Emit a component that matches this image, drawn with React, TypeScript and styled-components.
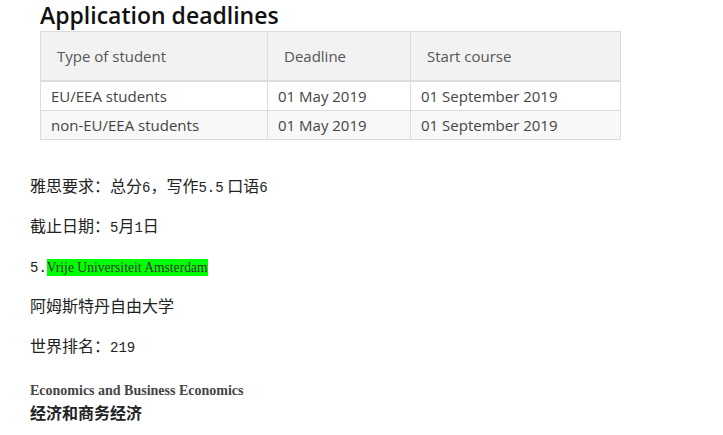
import React from 'react';
import styled, { createGlobalStyle } from 'styled-components';

const GlobalStyle = createGlobalStyle`
    html, body {
        margin: 0;
        padding: 0;
        background: #ffffff;
    }
`;

const Page = styled.div`
    padding: 0 0 0 30px;
    font-family: 'Liberation Mono', 'Noto Sans CJK SC', monospace;
    color: #222;
`;

const Deadlines = styled.section`
    margin-left: 10px;
    width: 580px;
    font-family: 'Open Sans', sans-serif;
`;

const Title = styled.h2`
    margin: 0 0 2px;
    padding-top: 1px;
    font-size: 23px;
    line-height: 28px;
    font-weight: 600;
    color: #111;
`;

const Table = styled.table`
    width: 580px;
    table-layout: fixed;
    border-collapse: collapse;
    border: 1px solid #dcdcdc;
    font-size: 15px;
`;

const HeadCell = styled.th<{ $w: number }>`
    box-sizing: border-box;
    width: ${(p) => p.$w}px;
    height: 49px;
    padding: 0 16px;
    text-align: left;
    font-weight: 400;
    color: #555;
    background: #f2f2f2;
    border: 1px solid #dcdcdc;
    border-bottom-width: 2px;
`;

const Row = styled.tr<{ $alt?: boolean }>`
    background: ${(p) => (p.$alt ? '#f8f8f8' : '#ffffff')};
`;

const Cell = styled.td`
    height: 28px;
    padding: 0 10px;
    color: #444;
    border: 1px solid #dcdcdc;
    white-space: nowrap;
`;

const Para = styled.p<{ $first?: boolean }>`
    margin: ${(p) => (p.$first ? '33px' : '16px')} 0 16px;
    font-size: 16px;
    line-height: 24px;
    font-family: 'Noto Sans CJK SC', 'Liberation Mono', monospace;
    color: #222;
`;

const Num = styled.span`
    font-family: 'Liberation Mono', monospace;
    font-size: 14px;
    line-height: 1;
`;

const Highlight = styled.span`
    background: #00ff00;
    font-family: 'Liberation Serif', serif;
    font-size: 13.6px;
    line-height: 1;
    padding: 1px 0;
    color: #333;
`;

const Subject = styled.div`
    margin-top: 25px;
    font-family: 'Liberation Serif', serif;
    font-weight: 700;
    font-size: 14px;
    line-height: 18px;
    color: #444;
`;

const SubjectCn = styled.div`
    font-family: 'Noto Sans CJK SC', sans-serif;
    font-weight: 700;
    font-size: 16px;
    line-height: 24px;
    color: #222;
`;

const rows = [
    ['EU/EEA students', '01 May 2019', '01 September 2019'],
    ['non-EU/EEA students', '01 May 2019', '01 September 2019'],
];

const App = () => (
    <>
        <GlobalStyle />
        <Page>
            <Deadlines>
                <Title>Application deadlines</Title>
                <Table>
                    <thead>
                        <tr>
                            <HeadCell $w={227}>Type of student</HeadCell>
                            <HeadCell $w={143}>Deadline</HeadCell>
                            <HeadCell $w={210}>Start course</HeadCell>
                        </tr>
                    </thead>
                    <tbody>
                        {rows.map((r, i) => (
                            <Row key={r[0]} $alt={i % 2 === 1}>
                                {r.map((c) => (
                                    <Cell key={c}>{c}</Cell>
                                ))}
                            </Row>
                        ))}
                    </tbody>
                </Table>
            </Deadlines>

            <Para $first>
                雅思要求：总分<Num>6</Num>，写作<Num>5.5</Num> 口语<Num>6</Num>
            </Para>
            <Para>
                截止日期：<Num>5</Num>月<Num>1</Num>日
            </Para>
            <Para>
                <Num>5.</Num>
                <Highlight>Vrije Universiteit Amsterdam</Highlight>
            </Para>
            <Para>阿姆斯特丹自由大学</Para>
            <Para>
                世界排名：<Num>219</Num>
            </Para>
            <Subject>Economics and Business Economics</Subject>
            <SubjectCn>经济和商务经济</SubjectCn>
        </Page>
    </>
);

export default App;
